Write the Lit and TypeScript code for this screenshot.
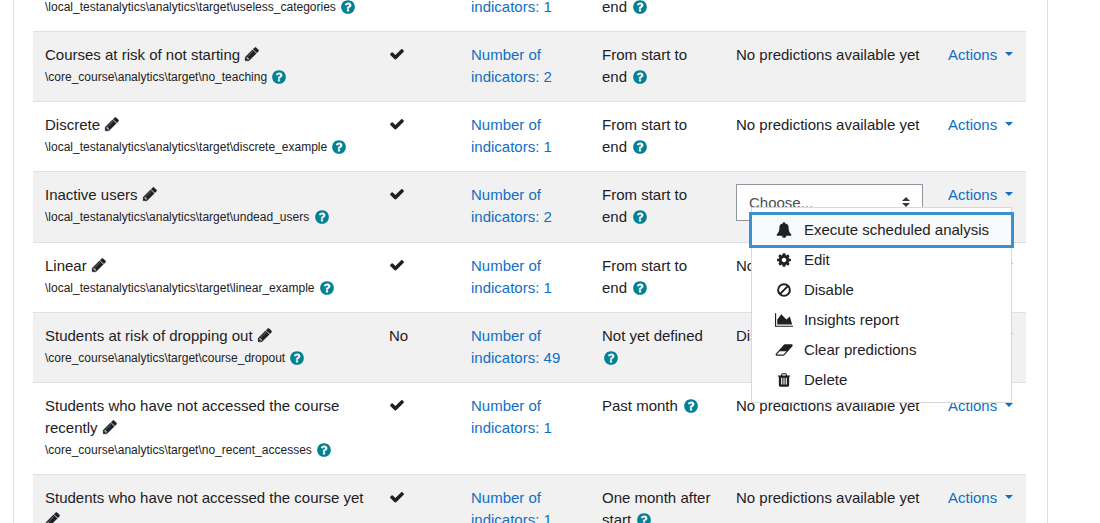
import { LitElement, html, css, svg, nothing } from "lit";
import { customElement, property } from "lit/decorators.js";

const ICONS: Record<string, { w: number; shape: unknown }> = {
  check: {
    w: 1792,
    shape: svg`<path d="M1671 566q0 40-28 68l-724 724-136 136q-28 28-68 28t-68-28l-136-136-362-362q-28-28-28-68t28-68l136-136q28-28 68-28t68 28l294 295 656-657q28-28 68-28t68 28l136 136q28 28 28 68z"/>`,
  },
  pencil: {
    w: 1792,
    shape: svg`<path stroke="currentColor" stroke-width="36" d="M491 1536l91-91-235-235-91 91v107h128v128h107zm523-928q0-22-22-22-10 0-17 7l-542 542q-7 7-7 17 0 22 22 22 10 0 17-7l542-542q7-7 7-17zm-54-192l416 416-832 832h-416v-416zm683 96q0 53-37 90l-166 166-416-416 166-165q36-38 90-38 53 0 91 38l235 234q37 39 37 91z"/>`,
  },
  help: {
    w: 1792,
    shape: svg`<path d="M1024 1376v-192q0-14-9-23t-23-9h-192q-14 0-23 9t-9 23v192q0 14 9 23t23 9h192q14 0 23-9t9-23zm256-672q0-88-55.500-163t-138.500-116-170-41q-243 0-371 213-15 24 8 42l132 100q7 6 19 6 16 0 25-12 53-68 86-92 34-24 86-24 48 0 85.500 26t37.500 59q0 38-20 61t-68 45q-63 28-115.500 86.500t-52.500 125.500v36q0 14 9 23t23 9h192q14 0 23-9t9-23q0-19 21.500-49.500t54.500-49.500q32-18 49-28.500t46-35 44.500-48 28-60.500 12.500-81zm384 192q0 209-103 385.500t-279.500 279.500-385.500 103-385.500-103-279.500-279.500-103-385.500 103-385.500 279.500-279.500 385.500-103 385.500 103 279.500 279.500 103 385.500z"/>`,
  },
  bell: {
    w: 1792,
    shape: svg`<path d="M912 1696q0-16-16-16-59 0-101.500-42.500t-42.500-101.500q0-16-16-16t-16 16q0 73 51.500 124.500t124.500 51.500q16 0 16-16zm816-288q0 52-38 90t-90 38h-448q0 106-75 181t-181 75-181-75-75-181h-448q-52 0-90-38t-38-90q50-42 91-88t85-119.500 74.500-158.500 50-206 19.500-260q0-152 117-282.500t307-158.500q-8-19-8-39 0-40 28-68t68-28 68 28 28 68q0 20-8 39 190 28 307 158.500t117 282.500q0 139 19.500 260t50 206 74.500 158.500 85 119.500 91 88z"/>`,
  },
  cog: {
    w: 1792,
    shape: svg`<path d="M1152 896q0-106-75-181t-181-75-181 75-75 181 75 181 181 75 181-75 75-181zm512-109v222q0 12-8 23t-20 13l-185 28q-19 54-39 91 35 50 107 138 10 12 10 25t-9 23q-27 37-99 108t-94 71q-12 0-26-9l-138-108q-44 23-91 38-16 136-29 186-7 28-36 28h-222q-14 0-24.500-8.500t-11.500-21.500l-28-184q-49-16-90-37l-141 107q-10 9-25 9-14 0-25-11-126-114-165-168-7-10-7-23 0-12 8-23 15-21 51-66.500t54-70.500q-27-50-41-99l-183-27q-13-2-21-12.500t-8-23.500v-222q0-12 8-23t19-13l186-28q14-46 39-92-40-57-107-138-10-12-10-24 0-10 9-23 26-36 98.500-107.500t94.500-71.500q13 0 26 10l138 107q44-23 91-38 16-136 29-186 7-28 36-28h222q14 0 24.500 8.500t11.500 21.500l28 184q49 16 90 37l142-107q9-9 24-9 13 0 25 10 129 119 165 170 7 8 7 22 0 12-8 23-15 21-51 66.500t-54 70.500q26 50 41 98l183 28q13 2 21 12.500t8 23.500z"/>`,
  },
  ban: {
    w: 1792,
    shape: svg`<g fill="none" stroke="currentColor" stroke-width="222"><circle cx="896" cy="896" r="657"/><path d="M431 1361L1361 431"/></g>`,
  },
  chart: {
    w: 2048,
    shape: svg`<path d="M2048 1536v128h-2048v-1536h128v1408h1920zm-384-1024l256 896h-1664v-576l448-576 576 576z"/>`,
  },
  eraser: {
    w: 2048,
    shape: svg`<path d="M960 1408l336-384h-768l-336 384h768zm1013-1077q15 34 9.500 71.500t-30.500 65.500l-896 1024q-38 44-96 44h-768q-38 0-69.500-20.500t-47.500-54.500q-15-34-9.500-71.500t30.500-65.500l896-1024q38-44 96-44h768q38 0 69.500 20.500t47.500 54.500z"/>`,
  },
  trash: {
    w: 1792,
    shape: svg`<path d="M704 1376v-704q0-14-9-23t-23-9h-64q-14 0-23 9t-9 23v704q0 14 9 23t23 9h64q14 0 23-9t9-23zm256 0v-704q0-14-9-23t-23-9h-64q-14 0-23 9t-9 23v704q0 14 9 23t23 9h64q14 0 23-9t9-23zm256 0v-704q0-14-9-23t-23-9h-64q-14 0-23 9t-9 23v704q0 14 9 23t23 9h64q14 0 23-9t9-23zm-544-992h448l-48-117q-7-9-17-11h-317q-10 2-17 11zm928 32v64q0 14-9 23t-23 9h-96v948q0 83-47 143.500t-113 60.500h-832q-66 0-113-58.500t-47-141.500v-952h-96q-14 0-23-9t-9-23v-64q0-14 9-23t23-9h309l70-167q15-37 54-63t79-26h320q40 0 79 26t54 63l70 167h309q14 0 23 9t9 23z"/>`,
  },
};

@customElement("fa-icon")
class FaIcon extends LitElement {
  static styles = css`
    :host { display: inline-block; height: 16px; }
    .glyph { display: block; height: 16px; fill: currentColor; }
  `;
  @property() name = "check";
  render() {
    const icon = ICONS[this.name];
    return html`<svg class="glyph" viewBox="0 0 ${icon.w} 1792" aria-hidden="true">${icon.shape}</svg>`;
  }
}

@customElement("actions-menu")
class ActionsMenu extends LitElement {
  static styles = css`
    :host { display: block; position: relative; }
    .toggle {
      display: flex; align-items: center; gap: 8px;
      color: #0f6fc5; text-decoration: none;
    }
    .caret {
      border: 4px solid transparent; border-top-color: currentColor; border-bottom: 0;
      margin-bottom: 2px;
    }
    .menu {
      position: absolute; z-index: 10; top: 23px; right: 2px;
      box-sizing: border-box; padding: 7px 0;
      background: #fff; border: 1px solid #d9d9d9;
    }
    .item {
      display: flex; align-items: center; gap: 12px;
      height: 30px; padding: 0 22px 0 24px;
      color: #1d2125; text-decoration: none; white-space: nowrap;
    }
    .item.focused { background: #f8f9fa; box-shadow: 0 0 0 3px #3a91d0; position: relative; }
    .slot { display: flex; justify-content: center; width: 16px; }
    .slot fa-icon { flex: none; }
  `;
  @property({ type: Boolean }) open = false;

  private items: [string, string][] = [
    ["bell", "Execute scheduled analysis"],
    ["cog", "Edit"],
    ["ban", "Disable"],
    ["chart", "Insights report"],
    ["eraser", "Clear predictions"],
    ["trash", "Delete"],
  ];

  render() {
    return html`
      <a class="toggle" href="#" role="button" aria-haspopup="true" aria-expanded=${this.open}>Actions<span class="caret"></span></a>
      ${this.open
        ? html`<div class="menu" role="menu">
            ${this.items.map(
              ([icon, label], i) => html`<a class="item ${i === 0 ? "focused" : ""}" role="menuitem" href="#"
                ><span class="slot"><fa-icon name=${icon}></fa-icon></span><span>${label}</span></a>`
            )}
          </div>`
        : nothing}
    `;
  }
}

interface Model {
  name?: string;
  target: string;
  enabled?: boolean;
  indicators: number;
  interval: string;
  status?: string;
  choose?: boolean;
}

const NONE = "No predictions available yet";

const MODELS: Model[] = [
  { name: "Courses at risk of not starting", target: "\\core_course\\analytics\\target\\no_teaching", enabled: true, indicators: 2, interval: "From start to end", status: NONE },
  { name: "Discrete", target: "\\local_testanalytics\\analytics\\target\\discrete_example", enabled: true, indicators: 1, interval: "From start to end", status: NONE },
  { name: "Inactive users", target: "\\local_testanalytics\\analytics\\target\\undead_users", enabled: true, indicators: 2, interval: "From start to end", choose: true },
  { name: "Linear", target: "\\local_testanalytics\\analytics\\target\\linear_example", enabled: true, indicators: 1, interval: "From start to end", status: NONE },
  { name: "Students at risk of dropping out", target: "\\core_course\\analytics\\target\\course_dropout", enabled: false, indicators: 49, interval: "Not yet defined", status: "Disabled" },
  { name: "Students who have not accessed the course recently", target: "\\core_course\\analytics\\target\\no_recent_accesses", enabled: true, indicators: 1, interval: "Past month", status: NONE },
  { name: "Students who have not accessed the course yet", target: "\\core_course\\analytics\\target\\no_access_since_course_start", enabled: true, indicators: 1, interval: "One month after start", status: NONE },
];

@customElement("app-root")
class AppRoot extends LitElement {
  static styles = css`
    :host {
      display: block; height: 100vh; overflow: hidden; background: #fff;
      font: 15px/22px "Liberation Sans", Arial, sans-serif; color: #1d2125;
    }
    .card {
      box-sizing: border-box; min-height: 100%;
      margin: 0 52px 0 13px; padding: 0 21px 0 19px;
      border: solid #dfe1e4; border-width: 0 1px;
    }
    .models { width: 100%; margin-top: -4px; border-collapse: separate; border-spacing: 0; table-layout: fixed; }
    .c-enabled { width: 82px; }
    .c-indicators { width: 131px; }
    .c-interval { width: 134px; }
    .c-status { width: 212px; }
    .c-actions { width: 90px; }
    .row td { padding: 12px; vertical-align: top; border-top: 1px solid #dee2e6; }
    .row:nth-child(even) { background: #f1f1f1; }
    .row.partial td { padding-top: 0; border-top: 0; }
    .link { color: #0f6fc5; text-decoration: none; }
    .edit { color: inherit; }
    .edit fa-icon, .tick { vertical-align: -2px; }
    .target { display: block; font-size: 12px; line-height: 23px; white-space: nowrap; }
    .help {
      display: inline-block; height: 16px; margin: 0 0 0 1px; padding: 0; border: 0;
      background: none; color: #008196; font-family: inherit; line-height: 16px; vertical-align: -3px;
    }
    .target .help { vertical-align: -4px; }
    .chooser { position: relative; width: 187px; }
    .select {
      box-sizing: border-box; width: 100%; height: 37px; padding: 0 12px; margin: 0; display: block;
      appearance: none; border: 1px solid #8f959e; border-radius: 0; background: #fff;
      color: #495057; font: inherit;
    }
    .arrows { position: absolute; right: 13px; top: 13px; width: 8px; height: 10px; fill: #343a40; pointer-events: none; }
    .row .choice { padding-bottom: 21px; }
  `;

  private help() {
    return html`<button class="help" type="button" aria-label="Help"><fa-icon name="help"></fa-icon></button>`;
  }

  private status(m: Model) {
    if (!m.choose) return m.status;
    return html`<div class="chooser">
      <select class="select" aria-label="Insights"><option>Choose...</option></select>
      <svg class="arrows" viewBox="0 0 8 10" aria-hidden="true"><path d="M0 4L4 0l4 4zM0 6h8L4 10z"/></svg>
    </div>`;
  }

  private row(m: Model) {
    return html`<tr class="row">
      <td>${m.name} <a class="edit" href="#" aria-label="Edit name"><fa-icon name="pencil"></fa-icon></a>
        <span class="target">${m.target} ${this.help()}</span></td>
      <td>${m.enabled ? html`<fa-icon class="tick" name="check"></fa-icon>` : "No"}</td>
      <td><a class="link" href="#">Number of indicators: ${m.indicators}</a></td>
      <td>${m.interval} ${this.help()}</td>
      <td class=${m.choose ? "choice" : ""}>${this.status(m)}</td>
      <td><actions-menu ?open=${!!m.choose}></actions-menu></td>
    </tr>`;
  }

  render() {
    return html`<main class="card">
      <table class="models">
        <colgroup>
          <col /><col class="c-enabled" /><col class="c-indicators" /><col class="c-interval" /><col class="c-status" /><col class="c-actions" />
        </colgroup>
        <tbody>
          <tr class="row partial">
            <td><span class="target">\\local_testanalytics\\analytics\\target\\useless_categories ${this.help()}</span></td>
            <td></td>
            <td><a class="link" href="#">indicators: 1</a></td>
            <td>end ${this.help()}</td>
            <td></td>
            <td></td>
          </tr>
          ${MODELS.map((m) => this.row(m))}
        </tbody>
      </table>
    </main>`;
  }
}
